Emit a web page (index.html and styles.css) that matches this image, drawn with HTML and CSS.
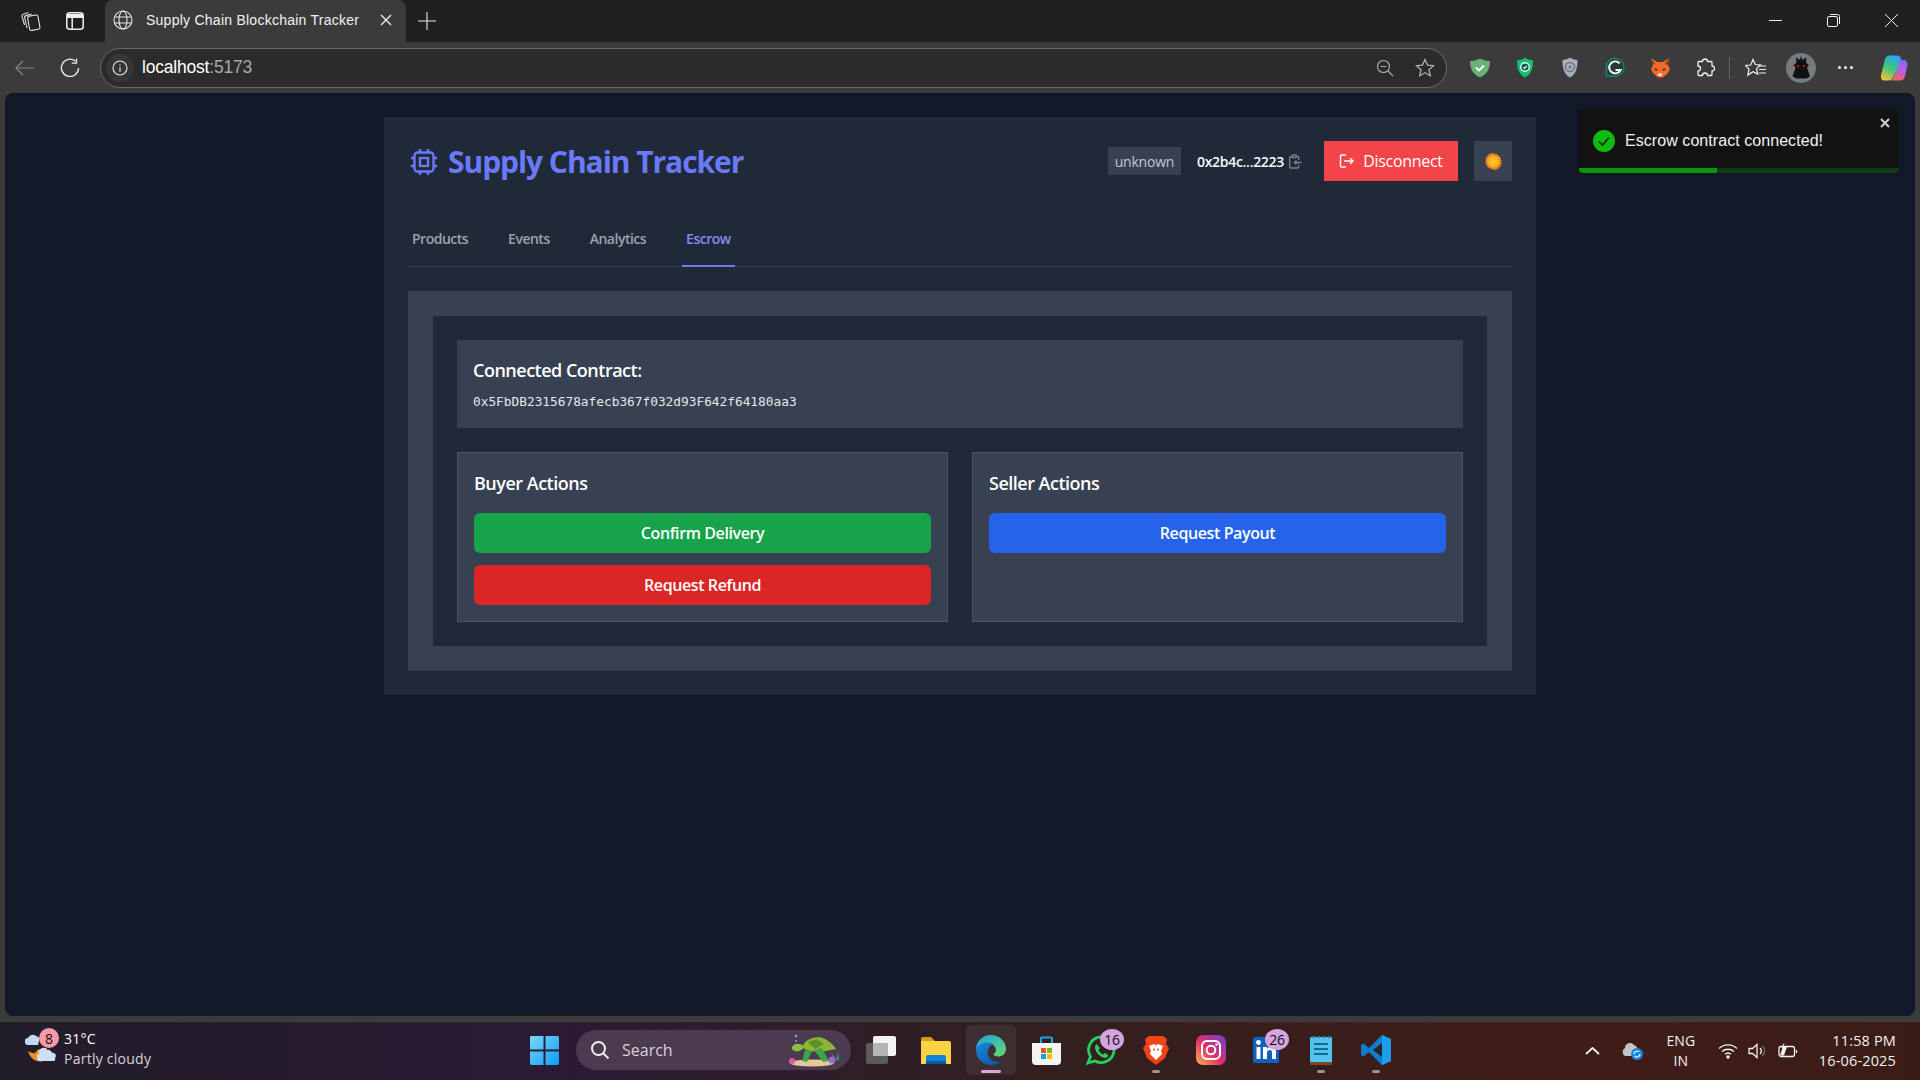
FILE: index.html
```html
<!DOCTYPE html>
<html lang="en">
<head>
<meta charset="utf-8">
<title>Supply Chain Blockchain Tracker</title>
<link rel="stylesheet" href="styles.css">
</head>
<body>
<header class="tabstrip">
  <div class="strip-left">
    <svg width="21" height="22" viewBox="0 0 21 22" fill="none" stroke="#e0e0e0" stroke-width="1.100"><rect x="8.500" y="5.500" width="10.500" height="14.500" rx="2" transform="rotate(-10 13.500 12.500)"/><path d="M7 18 4.700 8c-.3-1.200.3-2.100 1.400-2.400L11.500 4"/><path d="M4.500 15 2 6.500c-.3-1.200.3-2 1.300-2.300L8.500 2.500"/></svg>
    <svg width="18" height="18" viewBox="0 0 18 18" fill="none" stroke="#efefef" stroke-width="1.500"><rect x=".8" y=".8" width="16.400" height="16.400" rx="3"/><path d="M1 4h16" stroke-width="4"/><path d="M6.200 5v12"/></svg>
  </div>
  <div class="tab">
    <svg width="20" height="20" viewBox="0 0 20 20" fill="none" stroke="#e6e6e6" stroke-width="1.100"><circle cx="10" cy="10" r="9"/><ellipse cx="10" cy="10" rx="4" ry="9"/><path d="M1.600 7h16.800M1.600 13h16.800"/></svg>
    <span class="tab-title">Supply Chain Blockchain Tracker</span>
    <svg width="12" height="12" viewBox="0 0 12 12" stroke="#f2f2f2" stroke-width="1.300"><path d="M1 1l10 10M11 1 1 11"/></svg>
  </div>
  <span class="newtab"><svg width="18" height="18" viewBox="0 0 18 18" stroke="#e8e8e8" stroke-width="1.100"><path d="M9 0v18M0 9h18"/></svg></span>
  <div class="winctl">
    <svg width="13" height="13" viewBox="0 0 13 13" stroke="#f0f0f0" stroke-width="1"><path d="M0 6.500h13"/></svg>
    <svg width="13" height="13" viewBox="0 0 13 13" fill="none" stroke="#f0f0f0" stroke-width="1"><rect x=".5" y="2.500" width="10" height="10" rx="1.500"/><path d="M3 .5h7.500a2 2 0 0 1 2 2V10"/></svg>
    <svg width="13" height="13" viewBox="0 0 13 13" stroke="#f0f0f0" stroke-width="1"><path d="M0 0l13 13M13 0 0 13"/></svg>
  </div>
</header>

<nav class="toolbar">
  <svg width="20" height="16" viewBox="0 0 20 16" fill="none" stroke="#858585" stroke-width="1.200"><path d="M19 8H1M8 1 1 8l7 7"/></svg>
  <svg class="reload" width="20" height="20" viewBox="0 0 20 20" fill="none" stroke="#ededed" stroke-width="1.300"><path d="M15.500 3.200A8.600 8.600 0 1 0 18.600 10"/><path d="M16.500 .5v4.700h-4.700"/></svg>
  <div class="addressbar">
    <span class="info"><svg width="16" height="16" viewBox="0 0 16 16" fill="none" stroke="#e8e8e8" stroke-width="1.100"><circle cx="8" cy="8" r="7"/><path d="M8 7v5M8 4.200v1.200"/></svg></span>
    <span class="url">localhost<span class="url-dim">:5173</span></span>
    <span class="addr-end">
      <svg width="18" height="18" viewBox="0 0 18 18" fill="none" stroke="#a8a8a8" stroke-width="1.200"><circle cx="7.500" cy="7.500" r="6"/><path d="M4.500 7.500h6M12 12l5 5"/></svg>
      <svg width="20" height="20" viewBox="0 0 20 20" fill="none" stroke="#b5b5b5" stroke-width="1.200"><path d="m10 1.500 2.500 5.600 6 .6-4.500 4 1.300 6L10 14.600l-5.300 3.100 1.300-6-4.500-4 6-.6z"/></svg>
    </span>
  </div>
  <div class="exts">
    <span class="ext"><svg width="20" height="20" viewBox="0 0 20 20"><path d="M0 3C4 3 7 2 10 .5 13 2 16 3 20 3c0 8-3 13.500-10 16.500C3 16.500 0 11 0 3z" fill="#67b279"/><path d="m6 9.500 3 3 5-5" fill="none" stroke="#fff" stroke-width="1.800"/></svg></span>
    <span class="ext"><svg width="18" height="21" viewBox="0 0 18 21"><path d="M9 .5c2 1.800 5 2.600 8 2.800C17 12 15 17.500 9 20.500 3 17.500 1 12 1 3.300 4 3.100 7 2.300 9 .5z" fill="#0ec16c"/><circle cx="9" cy="10" r="5" fill="#e8f5ef"/><circle cx="9" cy="10" r="3.600" fill="#0b5c4a"/><path d="m7.300 10.300 1.200 1.200 2.300-2.600" fill="none" stroke="#fff" stroke-width="1.100"/></svg></span>
    <span class="ext"><svg width="16" height="21" viewBox="0 0 16 21"><path d="M8 .5c2 1.600 4.500 2.400 7.500 2.600 0 8.400-1.500 14.400-7.500 17.400C2 17.500.5 11.500.5 3.100 3.500 2.900 6 2.100 8 .5z" fill="#a9afbd"/><circle cx="8" cy="10" r="4.600" fill="none" stroke="#6d7486" stroke-width="1.500"/><circle cx="8" cy="10" r="1.600" fill="#6d7486"/></svg></span>
    <span class="ext"><svg width="20" height="21" viewBox="0 0 20 21"><path d="M10 .5a9.700 9.700 0 1 1 0 19.400H.5V10.500A9.700 9.700 0 0 1 10 .5z" fill="#11806c"/><path d="M2.200 18.200v-7.700a8 8 0 1 1 8 7.700z" fill="#2b3a38"/><path d="M14.600 6.300a6 6 0 1 0 1 6.700H10.500" fill="none" stroke="#fff" stroke-width="1.900"/></svg></span>
    <span class="ext"><svg width="20" height="20" viewBox="0 0 20 20"><path d="M1 0l6 4h6l6-4-1 7 2 4-2 4-5 4.500H8L3 15l-2-4 2-4z" fill="#f26b2b"/><path d="m1 0 4 6-3 1zM19 0l-4 6 3 1z" fill="#7a3d1a"/><path d="M4 10l4 1.500L6 13zM16 10l-4 1.500 2 1.500z" fill="#3b2a22"/><path d="M7.500 15.500h5L11.500 18h-3z" fill="#f4e0cd"/></svg></span>
    <span class="ext"><svg width="20" height="20" viewBox="0 0 20 20" fill="none" stroke="#f2f2f2" stroke-width="1.300" stroke-linejoin="round"><path d="M7.500 3.500a2.500 2.500 0 0 1 5 0H16a1 1 0 0 1 1 1V8a2.500 2.500 0 0 1 0 5v3.500a1 1 0 0 1-1 1h-3.500a2.500 2.500 0 0 0-5 0H4a1 1 0 0 1-1-1V13a2.500 2.500 0 0 0 0-5V4.500a1 1 0 0 1 1-1z"/></svg></span>
    <span class="ext-sep"></span>
    <span class="ext"><svg width="22" height="20" viewBox="0 0 22 20" fill="none" stroke="#f2f2f2" stroke-width="1.200"><path d="m8 1.500 2.300 5 5.200.5-4 3.600 1.200 5.500L8 13.700l-5.200 3.400 1.200-6-3.500-3.600 5.200-.5z"/><path d="M14 8h7M14 11.500h7M14 15h7"/></svg></span>
    <span class="ext"><span class="avatar"><svg width="24" height="26" viewBox="0 0 24 26"><path d="M12 1l1.500 4 4-2.500-.5 5 3 3-2 2 3 9-4 2H7.500l-4-2 3-9-2-2 3-3-.5-5 4 2.500z" fill="#111"/><circle cx="9" cy="11" r="1" fill="#e02020"/><circle cx="15" cy="11" r="1" fill="#e02020"/></svg></span></span>
    <span class="ext"><span class="dots"><i></i><i></i><i></i></span></span>
    <span class="ext ext-last"><svg width="28" height="26" viewBox="0 0 28 26"><defs><linearGradient id="cop1" x1=".6" y1="0" x2=".2" y2="1"><stop offset="0" stop-color="#27a8ee"/><stop offset=".5" stop-color="#3fc77a"/><stop offset="1" stop-color="#f5c33a"/></linearGradient><linearGradient id="cop2" x1=".6" y1="0" x2=".5" y2="1"><stop offset="0" stop-color="#7a6cf0"/><stop offset=".55" stop-color="#c65be0"/><stop offset="1" stop-color="#f2655a"/></linearGradient></defs><path d="M10 .5h7c2 0 3.500 1 4 3l1 3-9 16c-1 2-2.500 3-4.500 3H5c-3 0-4.500-2-4-5L5 4c.6-2.300 2.500-3.500 5-3.500z" fill="url(#cop1)"/><path d="M19 5h4c3 0 4.800 2 4.500 5l-2.500 11c-.6 3-2.500 4.500-5 4.500H9c2 0 3.500-1 4.500-3l4-8.500c1-3 1.500-6.500 1.500-9z" fill="url(#cop2)"/></svg></span>
  </div>
</nav>

<div class="pagewrap">
  <main class="viewport">
    <section class="card">
      <div class="head">
        <h1 class="brand">
          <svg width="28" height="28" viewBox="0 0 28 28" fill="none" stroke="#6b7afa" stroke-width="2.300"><rect x="4.500" y="4.500" width="19" height="19" rx="3"/><rect x="10" y="10" width="8" height="8"/><path d="M10 1v3.500M18 1v3.500M10 23.500V27M18 23.500V27M1 10h3.500M1 18h3.500M23.500 10H27M23.500 18H27"/></svg>
          Supply Chain Tracker
        </h1>
        <div class="head-right">
          <span class="badge">unknown</span>
          <span class="addr">0x2b4c...2223</span>
          <svg class="copy" width="13" height="15" viewBox="0 0 13 15" fill="none" stroke="#7b8494" stroke-width="1.300"><path d="M3.500 2.500H1.700a1 1 0 0 0-1 1V13a1 1 0 0 0 1 1h7a1 1 0 0 0 1-1v-2M9.700 6V3.500a1 1 0 0 0-1-1H7"/><rect x="3.500" y="1" width="3.500" height="2.600"/><path d="M12.500 8.500H5.500M7.500 6.500l-2 2 2 2"/></svg>
          <button class="disconnect"><svg width="15" height="14" viewBox="0 0 15 14" fill="none" stroke="#fff" stroke-width="1.400"><path d="M7 1H2.500a1 1 0 0 0-1 1v10a1 1 0 0 0 1 1H7M5 7h9M11 4l3 3-3 3"/></svg>Disconnect</button>
          <button class="theme"><svg width="17" height="17" viewBox="0 0 17 17"><defs><radialGradient id="sun" cx=".5" cy=".5" r=".55"><stop offset="0" stop-color="#fcd02f"/><stop offset="1" stop-color="#f29f1f"/></radialGradient></defs><path d="M8.500 0l1.300 1.300L11.500.7l.8 1.600 1.800-.2.200 1.800 1.700.7-.5 1.700 1.400 1.200-1 1.500 1 1.500-1.400 1.100.4 1.800-1.700.6-.3 1.800-1.800-.1-.8 1.600-1.700-.6L8.500 17l-1.300-1.300-1.700.6-.9-1.600-1.800.1-.2-1.800-1.700-.7.4-1.700L.1 9.500l1-1.500-1-1.400 1.400-1.200-.4-1.800 1.700-.6.200-1.800 1.800.2.900-1.600 1.700.6z" fill="#e77a1c"/><circle cx="8.500" cy="8.500" r="6.500" fill="url(#sun)"/></svg></button>
        </div>
      </div>
      <div class="tabs">
        <span class="navtab">Products</span>
        <span class="navtab">Events</span>
        <span class="navtab">Analytics</span>
        <span class="navtab active">Escrow</span>
      </div>
      <div class="outer">
        <div class="inner">
          <div class="contract">
            <h3 class="contract-title">Connected Contract:</h3>
            <p class="contract-addr">0x5FbDB2315678afecb367f032d93F642f64180aa3</p>
          </div>
          <div class="actions">
            <div class="action-card">
              <h4 class="action-title">Buyer Actions</h4>
              <button class="act green">Confirm Delivery</button>
              <button class="act red">Request Refund</button>
            </div>
            <div class="action-card">
              <h4 class="action-title">Seller Actions</h4>
              <button class="act blue">Request Payout</button>
            </div>
          </div>
        </div>
      </div>
    </section>
    <aside class="toast">
      <div class="toast-body">
        <svg width="22" height="22" viewBox="0 0 22 22"><circle cx="11" cy="11" r="11" fill="#10ba10"/><path d="m6 11.500 3.500 3.500 6.500-7.500" fill="none" stroke="#0c2b0c" stroke-width="1.600"/></svg>
        <span class="toast-text">Escrow contract connected!</span>
      </div>
      <svg class="toast-x" width="10" height="10" viewBox="0 0 10 10" stroke="#d0d0d0" stroke-width="2"><path d="M1 1l8 8M9 1 1 9"/></svg>
      <div class="toast-track"><div class="toast-fill"></div></div>
    </aside>
  </main>
</div>

<footer class="taskbar">
  <div class="weather">
    <span class="wx-icon">
      <svg width="34" height="34" viewBox="0 0 34 34"><path d="M3 23C5 31 12 35 18 33c3-1 4-5 4-13l-10 2c-1 4-4 4-9 1z" fill="#ec8f1e"/><path d="M0 14a3 3 0 0 1 3-4 5 5 0 0 1 8-2 3.500 3.500 0 0 1 3 5l-1 4H3a3 3 0 0 1-3-3z" fill="#c2d6f6"/><path d="M12 30a3 3 0 0 1 2-4 4.500 4.500 0 0 1 8-4 4 4 0 0 1 5 3 3 3 0 0 1 3 5 2 2 0 0 1-2 3H15a3 3 0 0 1-3-3z" fill="#cfdff8"/></svg>
      <span class="wx-badge">8</span>
    </span>
    <span class="wx-text"><span>31°C</span><span class="wx-sub">Partly cloudy</span></span>
  </div>
  <div class="center">
    <svg class="winlogo" width="29" height="29" viewBox="0 0 30 30"><defs><linearGradient id="win" x1="0" y1="0" x2="1" y2="1"><stop offset="0" stop-color="#7ad8fb"/><stop offset="1" stop-color="#0e9cf5"/></linearGradient></defs><path d="M0 1.500A1.500 1.500 0 0 1 1.500 0H14v14H0zM16 0h12.500A1.500 1.500 0 0 1 30 1.500V14H16zM0 16h14v14H1.500A1.500 1.500 0 0 1 0 28.500zM16 16h14v12.500a1.500 1.500 0 0 1-1.500 1.500H16z" fill="url(#win)"/></svg>
    <div class="search">
      <svg width="20" height="20" viewBox="0 0 20 20" fill="none" stroke="#f0f0f0" stroke-width="2"><circle cx="8.500" cy="8.500" r="6.500"/><path d="m13.500 13.500 5 5"/></svg>
      <span class="search-text">Search</span>
      <svg class="turtle" width="54" height="34" viewBox="0 0 54 34"><ellipse cx="24" cy="30" rx="22" ry="3.500" fill="#e5c896"/><path d="M14 14C18 5 29 2 37 6c5 3 9 6 11 10-4 1-7 1-10 2-9 1-18 1-24-4z" fill="#8cb63a"/><path d="M20 9l9-3 7 5-9 5z" fill="#5f8f2c"/><path d="M15 13c-3-3-9-3-11 1-1 3 3 5 7 4l4-2z" fill="#93bb40"/><path d="M26 17l9 12 6-1-7-13zM17 17l-3 11 5 1 5-11z" fill="#3fa347"/><circle cx="4" cy="28" r="3" fill="#d75aa8"/><circle cx="44" cy="27" r="3.500" fill="#9a6ad0"/><path d="M48 27l2-8 1 8zM45 24l-2-4 4 4z" fill="#3f9a78"/><circle cx="8" cy="3" r="1.300" fill="#5ab8e6"/><circle cx="8" cy="8" r="1" fill="#5ab8e6"/></svg>
    </div>
    <div class="tb-list">
    <span class="tb-item"><svg width="30" height="28" viewBox="0 0 30 28"><rect y="7" width="22" height="21" rx="2" fill="#5b5b5b"/><rect x="7" width="23" height="20" rx="2" fill="#f3f3f3"/><rect x="7" y="7" width="15" height="13" fill="#b5b5b5"/></svg></span>
    <span class="tb-item"><svg width="30" height="27" viewBox="0 0 30 27"><path d="M0 2a2 2 0 0 1 2-2h8l4 4H0z" fill="#d39c12"/><path d="M0 4h28a2 2 0 0 1 2 2v21H0z" fill="#fbd343"/><path d="M5 20a2 2 0 0 1 2-2h16a2 2 0 0 1 2 2v7H5z" fill="#1183da"/><path d="M5 24h20v3H5z" fill="#0a5aa8"/></svg></span>
    <span class="tb-item tb-active"><svg width="30" height="30" viewBox="0 0 30 30"><defs><linearGradient id="edge1" x1="0" y1="0" x2="1" y2="1"><stop offset="0" stop-color="#1f9fe0"/><stop offset="1" stop-color="#63dd6e"/></linearGradient><linearGradient id="edge2" x1="0" y1="0" x2="1" y2="1"><stop offset="0" stop-color="#1a8ad8"/><stop offset="1" stop-color="#0c4ea0"/></linearGradient></defs><path d="M0 14.500C0 6 7 0 15 0c9 0 15 7 15 14 0 5-4 7.500-8 7.500-3 0-4.500-1-4.500-2.500 2-1 3-3 2-6-2-5-8-6-12-4-4 2-7.500 3-7.500 5.500z" fill="url(#edge1)"/><path d="M0 14.500C0 24 7 30 15.500 30c4.500 0 8-1.500 11-4-6 2-12 0-14-5-2-5 0-10 5-12C11 6 1 8 0 14.500z" fill="url(#edge2)"/></svg><i class="pill pill-on"></i></span>
    <span class="tb-item"><svg width="29" height="29" viewBox="0 0 29 29"><path d="M9 7V2.500a1 1 0 0 1 1-1h9a1 1 0 0 1 1 1V7" fill="none" stroke="#18a7e8" stroke-width="2"/><path d="M0 7h29v18a4 4 0 0 1-4 4H4a4 4 0 0 1-4-4z" fill="#f4f4f4"/><rect x="9" y="12" width="5" height="5" fill="#f25022"/><rect x="15" y="12" width="5" height="5" fill="#7fba00"/><rect x="9" y="18" width="5" height="5" fill="#00a4ef"/><rect x="15" y="18" width="5" height="5" fill="#ffb900"/></svg></span>
    <span class="tb-item"><svg width="30" height="30" viewBox="0 0 30 30"><path d="M15.500 2A12.800 12.800 0 0 0 4.500 21.500L2 28l7-2A12.800 12.800 0 1 0 15.500 2z" fill="none" stroke="#25cf63" stroke-width="2.800"/><path d="M10.500 9c-1.500 1.500-2 3.500-1 6 1.500 3.500 4 6 7.500 7.500 2.500 1 4.500 0 5.500-2L19 18l-2 1.500c-2-1-3.500-2.500-4.500-4.500l1.500-2z" fill="#25cf63"/></svg><span class="count">16</span></span>
    <span class="tb-item"><svg width="26" height="29" viewBox="0 0 26 29"><path d="M6 0h14l4 3-1 5 3 4-4 10-9 7-9-7-4-10 3-4-1-5z" fill="#f0431c"/><path d="M6 10l5-2 2 1.500L15 8l5 2-2 5 1 3-6 6-6-6 1-3z" fill="#fff"/><path d="M10.500 12.500l1 2M15.500 12.500l-1 2" stroke="#f0431c" stroke-width="1.500"/></svg><i class="pill"></i></span>
    <span class="tb-item"><svg width="30" height="30" viewBox="0 0 30 30"><defs><linearGradient id="ig" x1="0" y1="1" x2="1" y2="0"><stop offset="0" stop-color="#fdb847"/><stop offset=".45" stop-color="#e1306c"/><stop offset="1" stop-color="#6a3fc8"/></linearGradient></defs><rect width="30" height="30" rx="7" fill="url(#ig)"/><rect x="6" y="6" width="18" height="18" rx="5" fill="none" stroke="#fff" stroke-width="2"/><circle cx="15" cy="15" r="4.300" fill="none" stroke="#fff" stroke-width="2"/><circle cx="20.500" cy="9.500" r="1.200" fill="#fff"/></svg></span>
    <span class="tb-item"><svg width="26" height="26" viewBox="0 0 26 26"><rect width="26" height="26" rx="1.500" fill="#0b62c3"/><rect x="3.500" y="10" width="4" height="12" fill="#fff"/><circle cx="5.500" cy="5.500" r="2.400" fill="#fff"/><path d="M10 10h4v2c1-1.500 2.500-2.300 4.300-2.300 3.300 0 4.700 2 4.700 5.300v7h-4v-6.300c0-1.700-.6-2.700-2.200-2.700-1.700 0-2.800 1.100-2.800 3V22h-4z" fill="#fff"/></svg><span class="count">26</span></span>
    <span class="tb-item"><svg width="22" height="30" viewBox="0 0 22 30"><rect y="2" width="22" height="28" rx="1" fill="#51c3ec"/><path d="M0 27h22v3H0z" fill="#7a4a26"/><circle cx="4" cy="2" r="1.300" fill="#2b7d9c"/><circle cx="9" cy="2" r="1.300" fill="#2b7d9c"/><circle cx="14" cy="2" r="1.300" fill="#2b7d9c"/><circle cx="19" cy="2" r="1.300" fill="#2b7d9c"/><path d="M4 9h14M4 14h14M4 19h14" stroke="#146c93" stroke-width="2"/></svg><i class="pill"></i></span>
    <span class="tb-item"><svg width="30" height="30" viewBox="0 0 30 30"><path d="M21 0 8 13 2.500 8.500 0 10v10l2.500 1.500L8 17l13 13 9-4V4z" fill="#0f7fcc"/><path d="M21 0l9 4v22l-9 4z" fill="#1e9de8"/><path d="M21 8l-9 7 9 7z" fill="#2b2226"/></svg><i class="pill"></i></span>
    </div>
  </div>
  <div class="tray">
    <svg width="15" height="8" viewBox="0 0 15 8" fill="none" stroke="#f4f4f4" stroke-width="1.800"><path d="m1 7 6.500-6 6.500 6"/></svg>
    <svg class="cloud" width="21" height="18" viewBox="0 0 21 18"><path d="M1 11a4 4 0 0 1 2-5 5 5 0 0 1 9-3 4 4 0 0 1 3 5l-3 6H4a3 3 0 0 1-3-3z" fill="#c4c4c4"/><circle cx="15" cy="12" r="6" fill="#1487e0"/><path d="M12 12a3 3 0 0 1 5.200-2M18 12a3 3 0 0 1-5.200 2" fill="none" stroke="#fff" stroke-width="1.200"/></svg>
    <span class="lang"><span>ENG</span><span>IN</span></span>
    <span class="tray-icons">
      <svg width="20" height="16" viewBox="0 0 20 16" fill="none" stroke="#f2f2f2" stroke-width="1.400"><path d="M1 5.500a13 13 0 0 1 18 0M4 8.500a9 9 0 0 1 12 0M7 11.300a4.500 4.500 0 0 1 6 0"/><circle cx="10" cy="14" r="1" fill="#f2f2f2"/></svg>
      <svg width="20" height="16" viewBox="0 0 20 16" fill="none" stroke="#f2f2f2" stroke-width="1.300"><path d="M1 5.500h3.500L9 1.500v13l-4.500-4H1z"/><path d="M12 5a4 4 0 0 1 0 6"/><path d="M14.500 3a7 7 0 0 1 0 10" stroke="#7a6a68"/></svg>
      <svg width="20" height="16" viewBox="0 0 20 16" fill="none" stroke="#f2f2f2" stroke-width="1.300"><rect x="1" y="3.500" width="15.500" height="10" rx="2"/><path d="M18.500 7v3"/><path d="M2 12.500h4l3-9H5z" fill="#f2f2f2" stroke="none"/><path d="M6 .5 4 5h4l-2 4" stroke-width="1"/></svg>
    </span>
    <span class="clock"><span>11:58 PM</span><span>16-06-2025</span></span>
  </div>
</footer>
</body>
</html>
```
FILE: styles.css
```css
* { box-sizing: border-box; }
html, body { margin: 0; height: 100%; }
body {
  width: 1920px; height: 1080px; overflow: hidden;
  display: flex; flex-direction: column;
  font-family: "Open Sans", "Noto Sans", sans-serif;
  background: #3a3a3a; color: #fff;
}
svg { flex: none; display: block; }
button { font-family: inherit; border: 0; cursor: pointer; }
h1, h3, h4, p { margin: 0; }

.tabstrip { height: 42px; background: #202020; display: flex; flex: none; }
.strip-left { width: 105px; height: 42px; display: flex; align-items: center; padding-left: 20px; gap: 25px; }
.tab {
  width: 301px; height: 42px; background: #3b3b3b; border-radius: 8px 8px 0 0;
  display: flex; align-items: center; padding: 0 14px 2px 8px; font-size: 14px; color: #f2f2f2;
}
.tab-title { margin-left: 13px; flex: 1; white-space: nowrap; font-family: "Liberation Sans", sans-serif; letter-spacing: .25px; }
.newtab { width: 42px; height: 42px; display: flex; align-items: center; justify-content: center; }
.winctl { margin-left: auto; height: 42px; display: flex; align-items: center; gap: 45px; padding-right: 22px; padding-bottom: 2px; }

.toolbar { height: 51px; background: #3b3b3b; display: flex; align-items: center; padding-left: 15px; flex: none; }
.reload { margin-left: 25px; }
.addressbar {
  margin-left: 20px; width: 1347px; height: 40px; border-radius: 20px; flex: none;
  background: #2b2b2b; border: 1px solid #6b6b6b; display: flex; align-items: center; padding: 0 11px 0 5px;
}
.info { width: 28px; height: 28px; border-radius: 50%; background: #363636; display: flex; align-items: center; justify-content: center; }
.url { margin-left: 8px; font-size: 17.500px; color: #fff; font-family: "Liberation Sans", sans-serif; letter-spacing: -.2px; }
.url-dim { color: #a9a9a9; }
.addr-end { margin-left: auto; display: flex; align-items: center; gap: 21px; }
.exts { display: flex; align-items: center; margin-left: 10px; }
.ext { width: 45px; display: flex; align-items: center; justify-content: center; flex: none; }
.ext-last { margin-left: 3px; }
.ext-sep { width: 1px; height: 22px; background: #666; margin: 0 3px 0 2px; flex: none; }
.avatar { width: 30px; height: 30px; border-radius: 50%; background: #757b7e; display: flex; align-items: center; justify-content: center; }
.dots { display: flex; gap: 3px; }
.dots i { width: 3px; height: 3px; border-radius: 50%; background: #f2f2f2; }

.pagewrap { height: 928px; flex: none; padding: 0 5px; background: #3b3b3b; }
.viewport {
  position: relative; height: 923px; background: #111827; border-radius: 8px;
  display: flex; justify-content: center; align-items: flex-start; padding-top: 24px;
}
.card { width: 1152px; height: 578px; background: #1f2937; padding: 24px; flex: none; }
.head { height: 40px; display: flex; align-items: center; justify-content: space-between; }
.brand { display: flex; align-items: center; gap: 10px; padding: 2px 0 0 2px; font-size: 30px; line-height: 36px; font-weight: 700; color: #6b7afa; letter-spacing: -1.05px; }
.head-right { display: flex; align-items: center; }
.badge { height: 28px; width: 73px; background: #374151; color: #c2c8d2; font-size: 14px; letter-spacing: -.2px; display: flex; align-items: center; justify-content: center; }
.addr { margin-left: 16px; font-size: 14px; font-weight: 600; color: #f9fafb; letter-spacing: -.3px; }
.copy { margin-left: 5px; }
.disconnect { margin-left: 22px; width: 134px; height: 40px; background: #f24449; color: #fff; font-size: 16px; display: flex; align-items: center; justify-content: center; gap: 9px; letter-spacing: -.3px; }
.theme { margin-left: 16px; width: 38px; height: 40px; background: #374151; display: flex; align-items: center; justify-content: center; padding: 0; }

.tabs { margin-top: 27px; height: 59px; display: flex; gap: 32px; border-bottom: 1px solid #374151; align-items: stretch; }
.navtab { padding: 3px 4px 0; height: 59px; display: flex; align-items: center; font-size: 14px; font-weight: 600; color: #9ca3af; letter-spacing: -.5px; border-bottom: 2px solid transparent; }
.navtab.active { color: #818cf8; border-bottom-color: #6d78f7; }

.outer { margin-top: 24px; background: #374151; padding: 25px 25px 24px; height: 380px; }
.inner { background: #1f2937; padding: 24px; height: 330px; }
.contract { background: #374151; height: 88px; padding: 18px 16px; }
.contract-title { font-size: 18px; line-height: 24px; font-weight: 600; color: #fff; letter-spacing: -.5px; }
.contract-addr { margin-top: 12px; font-family: "DejaVu Sans Mono", "Liberation Mono", monospace; font-size: 12.8px; line-height: 16px; color: #e5e7eb; }
.actions { margin-top: 24px; display: grid; grid-template-columns: 491px 491px; gap: 24px; }
.action-card { height: 170px; background: #374151; border: 1px solid #4b5563; padding: 16px; display: flex; flex-direction: column; }
.action-title { font-size: 18px; line-height: 28px; font-weight: 600; color: #fff; letter-spacing: -.5px; margin-bottom: 16px; }
.act { height: 40px; border-radius: 6px; color: #fff; font-size: 16px; font-weight: 600; width: 100%; letter-spacing: -.4px; margin-bottom: 12px; flex: none; }
.green { background: #16a34a; }
.red { background: #dc2626; }
.blue { background: #2563eb; }

.toast { position: absolute; top: 16px; right: 16px; width: 320px; height: 64px; background: #121212; border-radius: 4px; overflow: hidden; }
.toast-body { height: 59px; display: flex; align-items: center; padding: 5px 0 0 14px; gap: 10px; }
.toast-text { font-family: "Liberation Sans", sans-serif; font-size: 16px; color: #f2f2f2; letter-spacing: .06px; }
.toast-x { position: absolute; top: 9px; right: 9px; }
.toast-track { position: absolute; left: 0; right: 0; bottom: 0; height: 5px; background: #0f3b12; }
.toast-fill { width: 43%; height: 100%; background: #0a960d; }

.taskbar {
  height: 59px; flex: none; display: flex; align-items: center; position: relative;
  background: linear-gradient(90deg, #211d2a 0%, #2c1a34 30%, #32201f 55%, #401c18 80%, #3a1c16 100%);
  border-top: 1px solid #423f42;
}
.weather { display: flex; align-items: center; padding-left: 25px; gap: 5px; }
.wx-icon { position: relative; width: 34px; height: 46px; display: block; }
.wx-badge { position: absolute; left: 14px; top: 0; width: 20px; height: 20px; border-radius: 50%; background: #f79aa6; color: #111; font-size: 14px; display: flex; align-items: center; justify-content: center; font-family: "Open Sans", sans-serif; }
.wx-text { display: flex; flex-direction: column; font-size: 14px; line-height: 20px; padding-bottom: 4px; letter-spacing: .25px; }
.wx-sub { color: #d8d4d8; }
.center { position: absolute; left: 530px; top: 0; height: 56px; display: flex; align-items: center; }
.winlogo { margin-right: 17px; }
.search { width: 275px; height: 40px; border-radius: 20px; background: #4c3a50; display: flex; align-items: center; padding-left: 14px; flex: none; }
.search-text { margin-left: 12px; font-size: 16px; color: #d8d2d8; }
.turtle { margin-left: auto; margin-right: 9px; }
.tb-list { margin-left: 2.500px; display: flex; gap: 5px; padding-left: 2.500px; }
.tb-item { position: relative; width: 50px; height: 50px; display: flex; align-items: center; justify-content: center; border-radius: 5px; flex: none; }
.tb-active { background: rgba(255,255,255,.07); }
.pill { position: absolute; left: 50%; bottom: 2px; width: 8px; height: 3px; margin-left: -4px; border-radius: 2px; background: #9a9494; }
.pill-on { width: 20px; margin-left: -10px; background: #dca6df; }
.count { position: absolute; top: 4px; right: 2px; width: 24px; height: 21px; border-radius: 50%; background: #d6a3e0; color: #111; font-size: 14px; letter-spacing: -.3px; display: flex; align-items: center; justify-content: center; font-family: "Open Sans", sans-serif; }
.tray { margin-left: auto; height: 58px; display: flex; align-items: center; font-size: 14px; color: #f2f2f2; padding-right: 24px; }
.cloud { margin-left: 22px; }
.lang { margin-left: 24px; width: 28px; display: flex; flex-direction: column; align-items: center; line-height: 20px; padding-bottom: 1px; }
.tray-icons { margin-left: 23px; display: flex; gap: 10px; }
.clock { margin-left: 21px; display: flex; flex-direction: column; align-items: flex-end; line-height: 20px; font-size: 14.500px; letter-spacing: .15px; padding-bottom: 1px; }
```
